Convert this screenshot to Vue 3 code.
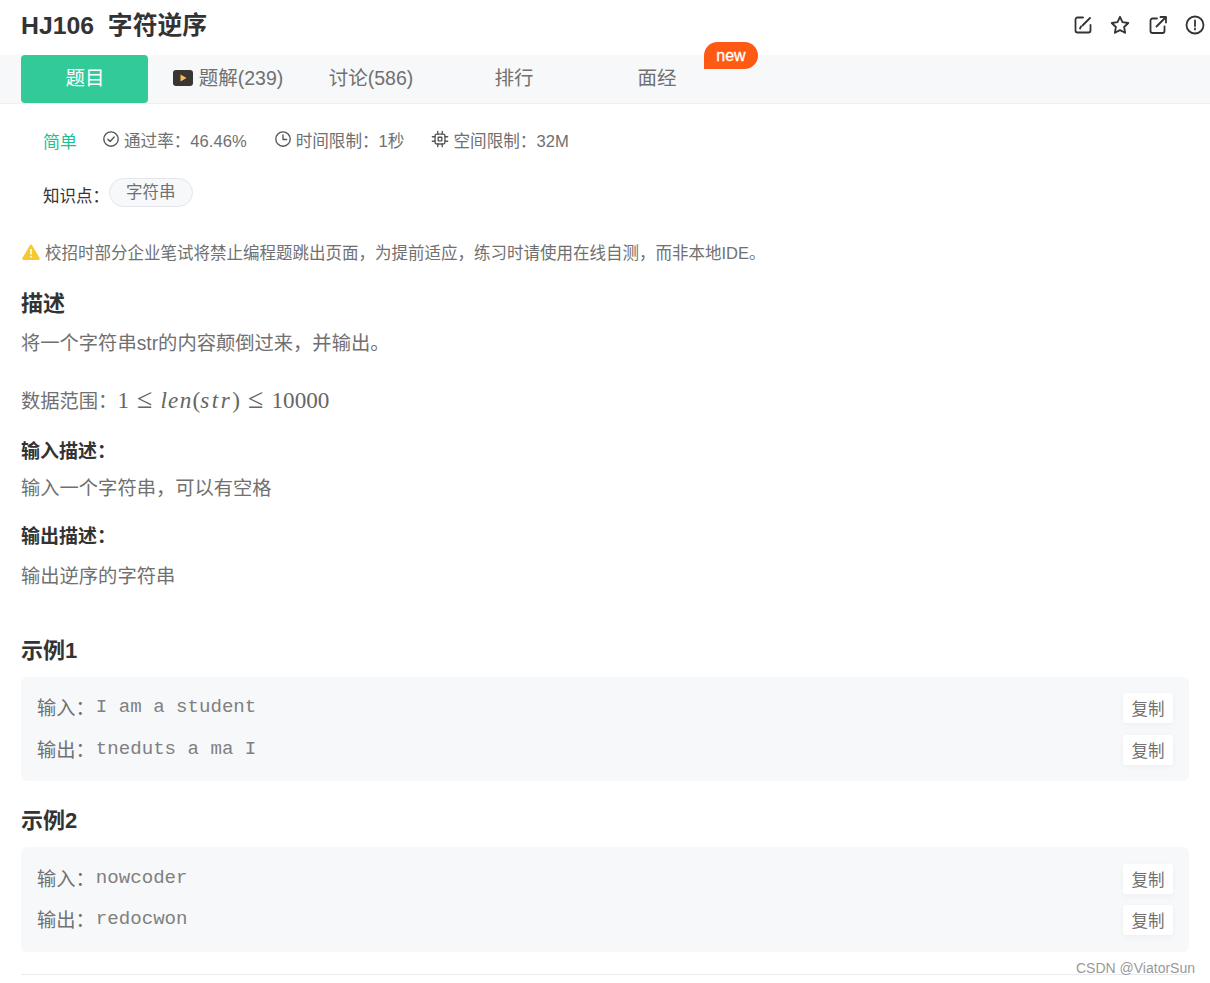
<template>
  <div class="page">
    <header class="title-row">
      <h1 class="title">HJ106&nbsp;&nbsp;字符逆序</h1>
      <div class="title-icons">
        <svg viewBox="0 0 20 20" class="icon"><path d="M10 2.5H4.500a2 2 0 0 0-2 2v11a2 2 0 0 0 2 2h11a2 2 0 0 0 2-2V10M17 3 9.500 10.500M7 13.500l1-2" /></svg>
        <svg viewBox="0 0 20 20" class="icon"><path d="M10 1.800l2.500 5.400 5.800.8-4.200 4 1.050 5.800L10 15.100l-5.150 2.700L5.900 12l-4.200-4 5.800-.8z" /></svg>
        <svg viewBox="0 0 20 20" class="icon"><path d="M9 3.500H4.500a2 2 0 0 0-2 2V16a2 2 0 0 0 2 2h10a2 2 0 0 0 2-2v-4.500M8.500 11.500 17.500 2.500M12.500 2h5.500v5.500" /></svg>
        <svg viewBox="0 0 20 20" class="icon"><circle cx="10" cy="10" r="8.500" /><path d="M10 5.500v5.500M10 13.500v1" /></svg>
      </div>
    </header>

    <nav class="tabs">
      <div v-for="t in tabs" :key="t.label" class="tab" :class="{ active: t.active }">
        <svg v-if="t.video" viewBox="0 0 20 16" class="video-icon">
          <rect width="20" height="16" rx="3" fill="#3a3632" />
          <path d="M7.500 4.500v7l6-3.500z" fill="#f6bd5c" />
        </svg>
        {{ t.label }}
      </div>
      <span class="new-badge">new</span>
    </nav>

    <div class="meta">
      <span class="level">简单</span>
      <span class="meta-item">
        <svg viewBox="0 0 20 20" class="meta-icon"><circle cx="10" cy="10" r="8" /><path d="M6.500 10.200l2.500 2.500 4.500-5" /></svg>
        通过率&#xFF1A;46.46%
      </span>
      <span class="meta-item">
        <svg viewBox="0 0 20 20" class="meta-icon"><circle cx="10" cy="10" r="8" /><path d="M10 5.500V10.500H14" /></svg>
        时间限制&#xFF1A;1秒
      </span>
      <span class="meta-item">
        <svg viewBox="0 0 20 20" class="meta-icon"><rect x="4.500" y="4.500" width="11" height="11" rx="2" /><rect x="8" y="8" width="4" height="4" /><path d="M7.500 1.500v3M12.500 1.500v3M7.500 15.500v3M12.500 15.500v3M1.500 7.500h3M1.500 12.500h3M15.500 7.500h3M15.500 12.500h3" /></svg>
        空间限制&#xFF1A;32M
      </span>
    </div>

    <div class="knowledge">
      <span class="knowledge-label">知识点&#xFF1A;</span>
      <span class="pill">字符串</span>
    </div>

    <div class="warning">
      <svg viewBox="0 0 18 16" class="warn-icon">
        <path d="M9 .5a1.300 1.300 0 0 1 1.100.7l7.500 12.800a1.300 1.300 0 0 1-1.100 1.900h-15A1.300 1.300 0 0 1 .4 14L7.900 1.200A1.300 1.300 0 0 1 9 .5z" fill="#f5c92f" />
        <path d="M9 5v5.500M9 12v1.500" stroke="#fff" stroke-width="1.600" fill="none" />
      </svg>
      校招时部分企业笔试将禁止编程题跳出页面&#xFF0C;为提前适应&#xFF0C;练习时请使用在线自测&#xFF0C;而非本地IDE。
    </div>

    <h2 class="heading h-desc">描述</h2>
    <p class="text t-desc">将一个字符串str的内容颠倒过来&#xFF0C;并输出。</p>
    <p class="text t-range">数据范围&#xFF1A;<span class="math">1<span class="rel">≤</span><i class="m-len">len</i>(<i class="m-str">str</i>)<span class="rel">≤</span>10000</span></p>

    <h3 class="sub-heading s-in">输入描述&#xFF1A;</h3>
    <p class="text t-sub">输入一个字符串&#xFF0C;可以有空格</p>
    <h3 class="sub-heading s-out">输出描述&#xFF1A;</h3>
    <p class="text t-sub2">输出逆序的字符串</p>

    <template v-for="(s, i) in samples" :key="s.title">
      <h2 class="heading" :class="i === 0 ? 'h-sample1' : 'h-sample2'">{{ s.title }}</h2>
      <div class="sample" :class="{ 'sample-alt': i === 1 }">
        <div v-for="r in s.rows" :key="r.label" class="sample-row">
          <span class="sample-label">{{ r.label }}&#xFF1A;</span>
          <span class="sample-value">{{ r.value }}</span>
          <button class="copy-btn">复制</button>
        </div>
      </div>
    </template>

    <div class="bottom-line"></div>
    <span class="watermark">CSDN @ViatorSun</span>
  </div>
</template>

<script setup>
const tabs = [
  { label: '题目', active: true },
  { label: '题解(239)', video: true },
  { label: '讨论(586)' },
  { label: '排行' },
  { label: '面经' }
]

const samples = [
  {
    title: '示例1',
    rows: [
      { label: '输入', value: 'I am a student' },
      { label: '输出', value: 'tneduts a ma I' }
    ]
  },
  {
    title: '示例2',
    rows: [
      { label: '输入', value: 'nowcoder' },
      { label: '输出', value: 'redocwon' }
    ]
  }
]
</script>

<style>
html, body { background: #fff; }
</style>

<style scoped>
.page {
  position: relative;
  width: 1210px;
  font-family: "Liberation Sans", "Noto Sans CJK SC", sans-serif;
  color: #707070;
}
.title-row {
  height: 55px;
  display: flex;
  align-items: flex-start;
  justify-content: space-between;
  padding: 9px 5px 0 21px;
  box-sizing: border-box;
}
.title {
  margin: 0;
  font-size: 24.8px;
  line-height: 34px;
  font-weight: 700;
  color: #333;
}
.title-icons {
  display: flex;
  gap: 17.5px;
  padding-top: 6px;
}
.icon {
  width: 20px;
  height: 20px;
  fill: none;
  stroke: #333;
  stroke-width: 1.8;
  stroke-linecap: round;
  stroke-linejoin: round;
}

.tabs {
  position: relative;
  display: flex;
  gap: 16px;
  height: 49px;
  box-sizing: border-box;
  padding-left: 21px;
  background: #f7f8f9;
  border-bottom: 1px solid #eef0f3;
}
.tab {
  width: 127px;
  height: 48px;
  box-sizing: border-box;
  padding-bottom: 5px;
  padding-left: 1px;
  display: flex;
  align-items: center;
  justify-content: center;
  gap: 6px;
  font-size: 19.5px;
  color: #707070;
  border-radius: 4px;
}
.tab.active {
  background: #32ca99;
  color: #fff;
}
.video-icon { width: 20px; height: 16px; margin-top: 3px; }
.new-badge {
  position: absolute;
  left: 704px;
  top: -13px;
  width: 54px;
  height: 27px;
  background: #ff5a14;
  border-radius: 14px 14px 14px 0;
  color: #fff;
  font-size: 16px;
  -webkit-text-stroke: 0.3px #fff;
  line-height: 27px;
  text-align: center;
}

.meta {
  display: flex;
  align-items: center;
  height: 32px;
  margin-top: 20px;
  padding-left: 43px;
  font-size: 16.6px;
}
.level {
  color: #1fbf94;
  font-size: 17px;
  margin-right: 25px;
}
.meta-item {
  display: flex;
  align-items: center;
  gap: 4px;
  margin-right: 27px;
}
.meta-icon {
  width: 18px;
  height: 18px;
  margin-top: -3px;
  fill: none;
  stroke: #555;
  stroke-width: 1.5;
  stroke-linecap: round;
  stroke-linejoin: round;
}

.knowledge {
  display: flex;
  align-items: flex-start;
  margin-top: 22px;
  padding-left: 43px;
  font-size: 16.5px;
}
.knowledge-label {
  color: #333;
  line-height: 24px;
  margin-top: 6px;
}
.pill {
  height: 29px;
  box-sizing: border-box;
  padding: 0 16px;
  line-height: 26px;
  border: 1px solid #e4e6ea;
  border-radius: 15px;
  background: #f7f8f9;
}

.warning {
  display: flex;
  align-items: center;
  gap: 5px;
  margin-top: 32px;
  padding-left: 22px;
  height: 24px;
  font-size: 16.5px;
}
.warn-icon { width: 18px; height: 16px; }

.heading {
  margin: 0;
  padding-left: 21px;
  font-size: 22px;
  line-height: 30px;
  font-weight: 700;
  color: #333;
}
.h-desc { margin-top: 25px; }
.h-sample1 { margin-top: 44px; }
.h-sample2 { margin-top: 25px; }

.text {
  margin: 0;
  padding-left: 21px;
  font-size: 19.3px;
  line-height: 30px;
}
.t-desc { margin-top: 10px; }
.t-range { margin-top: 26px; }
.t-sub { margin-top: 10px; }
.t-sub2 { margin-top: 13px; }

.math {
  font-family: "Liberation Serif", serif;
  font-size: 23.2px;
  line-height: 1;
  color: #666;
}
.rel {
  display: inline-block;
  margin: 0 8px;
  font-size: 28px;
  line-height: 1;
}
.m-len { letter-spacing: 1.3px; }
.m-str { letter-spacing: 2.5px; }

.sub-heading {
  margin: 0;
  padding-left: 21px;
  font-size: 19px;
  line-height: 24px;
  font-weight: 700;
  color: #333;
}
.s-in { margin-top: 23px; }
.s-out { margin-top: 21px; }

.sample {
  margin: 11px 21px 0;
  padding: 16px;
  display: flex;
  flex-direction: column;
  gap: 12px;
  background: #f7f8fa;
  border-radius: 6px;
}
.sample-alt {
  padding-top: 17px;
  padding-bottom: 17px;
  gap: 11px;
}
.sample-row {
  display: flex;
  align-items: center;
  height: 30px;
}
.sample-label { font-size: 19.3px; margin-top: -2px; }
.sample-value {
  flex: 1;
  margin: -2px 0 0 1px;
  font-family: "Liberation Mono", monospace;
  font-size: 19.1px;
  color: #808080;
  white-space: pre;
}
.copy-btn {
  width: 50px;
  height: 30px;
  padding: 0;
  border: none;
  border-radius: 3px;
  background: #fff;
  box-shadow: 0 2px 6px rgba(0, 0, 0, 0.04);
  font-family: inherit;
  font-size: 16.5px;
  color: #707070;
}

.bottom-line {
  margin: 22px 21px 0;
  border-top: 1px solid #e9ebf0;
}
.watermark {
  position: absolute;
  right: 15px;
  bottom: -1px;
  font-size: 14px;
  line-height: 16px;
  color: #999;
}
</style>
